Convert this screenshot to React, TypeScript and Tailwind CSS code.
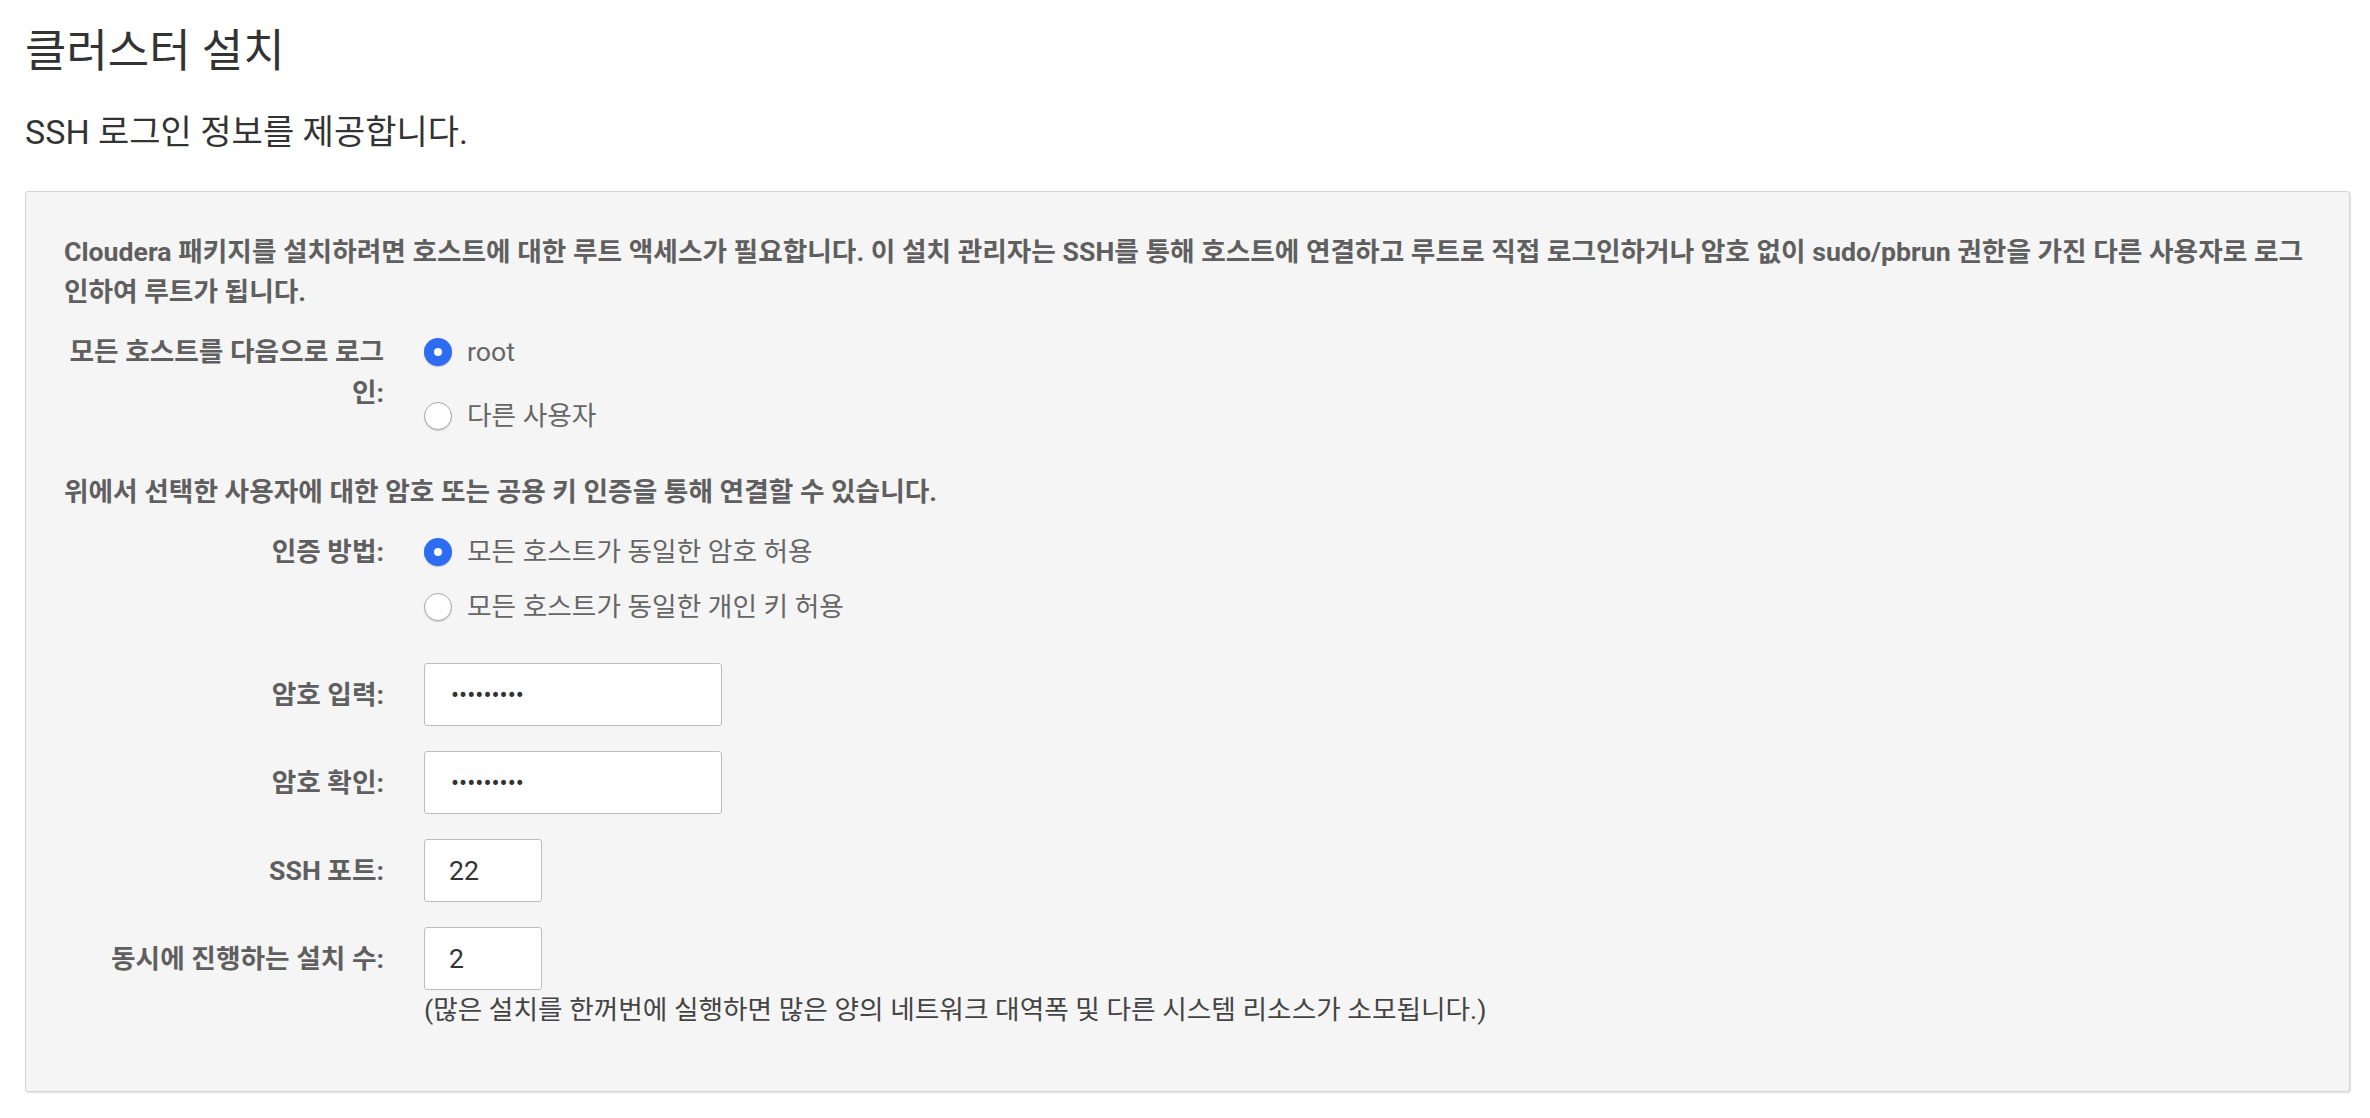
import React from 'react';

const font = { fontFamily: 'Roboto, "Noto Sans CJK KR", sans-serif' };

function Radio({ checked, label }: { checked: boolean; label: string }) {
  return (
    <label className="flex items-center h-[40px] gap-[15px] text-[26.7px] text-[#666]">
      {checked ? (
        <span className="w-[28px] h-[28px] rounded-full bg-[#2e6cf2] flex items-center justify-center shadow-[0_1px_1px_rgba(0,0,0,0.2)]">
          <span className="w-[8px] h-[8px] rounded-full bg-white" />
        </span>
      ) : (
        <span className="w-[28px] h-[28px] rounded-full bg-white border border-[#aaa] shadow-[0_1px_1px_rgba(0,0,0,0.15)]" />
      )}
      <span>{label}</span>
    </label>
  );
}

function FieldRow({ label, children }: { label: string; children: React.ReactNode }) {
  return (
    <div className="flex items-center -ml-[20px]">
      <div className="w-[340px] text-right font-bold text-[26.7px] text-[#5f5f5f] leading-[40px] whitespace-nowrap">{label}</div>
      <div className="ml-[40px]">{children}</div>
    </div>
  );
}

export default function App() {
  return (
    <div className="min-h-screen bg-white pl-[25px] pr-[20px] pt-[28px]" style={font}>
      <h1 className="text-[45px] leading-[48px] text-[#333] font-normal">클러스터 설치</h1>
      <p className="mt-[36px] text-[34px] leading-[40px] text-[#333]">SSH 로그인 정보를 제공합니다.</p>

      <div className="mt-[39px] bg-[#f5f5f5] border border-[#d6d6d6] rounded-[3px] shadow-[1px_1px_2px_rgba(0,0,0,0.12)] pl-[38px] pr-[42px] pt-[40px] pb-[61px]">
        <p className="font-bold text-[26.7px] leading-[40px] text-[#5f5f5f]">
          Cloudera 패키지를 설치하려면 호스트에 대한 루트 액세스가 필요합니다. 이 설치 관리자는 SSH를 통해 호스트에 연결하고 루트로 직접 로그인하거나 암호 없이 sudo/pbrun 권한을 가진 다른 사용자로 로그인하여 루트가 됩니다.
        </p>

        {/* login user */}
        <div className="mt-[20px] flex items-start -ml-[20px]">
          <div className="w-[340px] text-right font-bold text-[26.7px] text-[#5f5f5f] leading-[41px] whitespace-nowrap">
            모든 호스트를 다음으로 로그
            <br />
            인:
          </div>
          <div className="ml-[40px] flex flex-col gap-[24px]">
            <Radio checked label="root" />
            <Radio checked={false} label="다른 사용자" />
          </div>
        </div>

        <p className="mt-[36px] font-bold text-[26.7px] leading-[40px] text-[#5f5f5f]">
          위에서 선택한 사용자에 대한 암호 또는 공용 키 인증을 통해 연결할 수 있습니다.
        </p>

        {/* auth method */}
        <div className="mt-[20px] flex items-start -ml-[20px]">
          <div className="w-[340px] text-right font-bold text-[26.7px] text-[#5f5f5f] leading-[40px]">인증 방법:</div>
          <div className="ml-[40px] flex flex-col gap-[15px]">
            <Radio checked label="모든 호스트가 동일한 암호 허용" />
            <Radio checked={false} label="모든 호스트가 동일한 개인 키 허용" />
          </div>
        </div>

        <div className="mt-[36px] flex flex-col gap-[25px]">
          <FieldRow label="암호 입력:">
            <input
              type="password"
              readOnly
              value="123456789"
              className="w-[298px] h-[63px] bg-white border-[1.5px] border-[#bdbdbd] rounded-[3px] pl-[26px] text-[24px] text-[#333] outline-none"
            />
          </FieldRow>
          <FieldRow label="암호 확인:">
            <input
              type="password"
              readOnly
              value="123456789"
              className="w-[298px] h-[63px] bg-white border-[1.5px] border-[#bdbdbd] rounded-[3px] pl-[26px] text-[24px] text-[#333] outline-none"
            />
          </FieldRow>
          <FieldRow label="SSH 포트:">
            <input
              type="text"
              readOnly
              value="22"
              className="w-[118px] h-[63px] bg-white border-[1.5px] border-[#bdbdbd] rounded-[3px] pl-[24px] text-[26.7px] text-[#333] outline-none"
            />
          </FieldRow>
          <FieldRow label="동시에 진행하는 설치 수:">
            <input
              type="text"
              readOnly
              value="2"
              className="w-[118px] h-[63px] bg-white border-[1.5px] border-[#bdbdbd] rounded-[3px] pl-[24px] text-[26.7px] text-[#333] outline-none"
            />
          </FieldRow>
        </div>
        <p className="ml-[360px] text-[26.7px] leading-[40px] text-[#444]">
          (많은 설치를 한꺼번에 실행하면 많은 양의 네트워크 대역폭 및 다른 시스템 리소스가 소모됩니다.)
        </p>
      </div>
    </div>
  );
}
